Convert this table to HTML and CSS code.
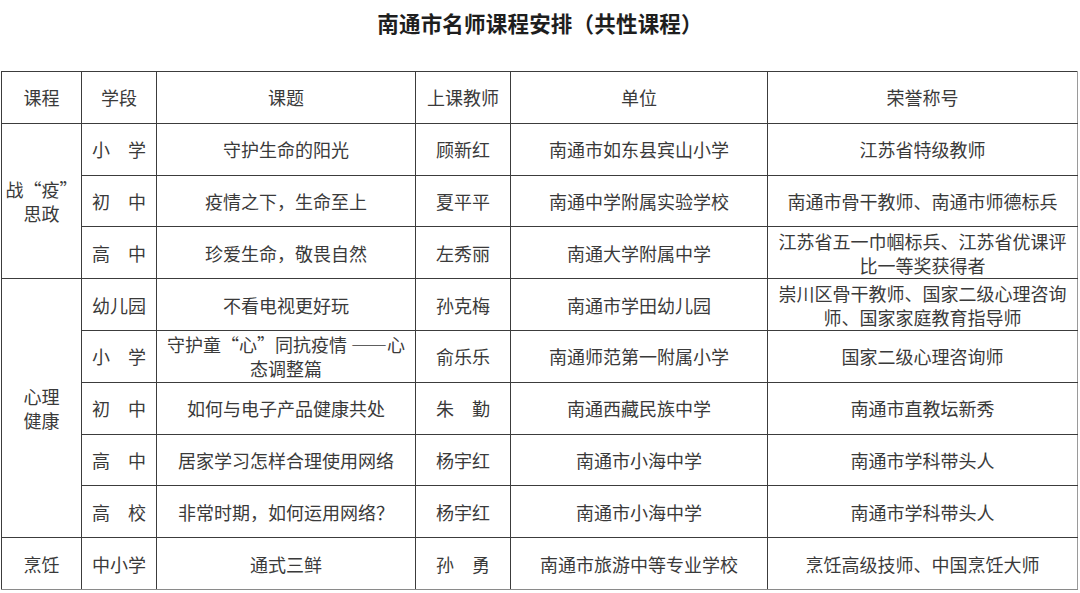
FILE: index.html
```html
<!DOCTYPE html>
<html lang="zh-CN">
<head>
<meta charset="utf-8">
<title>南通市名师课程安排（共性课程）</title>
<link rel="stylesheet" href="styles.css">
</head>
<body>
<div class="page">
  <h1 class="title">南通市名师课程安排（共性课程）</h1>
  <table class="sched">
    <colgroup>
      <col class="c1"><col class="c2"><col class="c3"><col class="c4"><col class="c5"><col class="c6">
    </colgroup>
    <thead>
      <tr><th>课程</th><th>学段</th><th>课题</th><th>上课教师</th><th>单位</th><th>荣誉称号</th></tr>
    </thead>
    <tbody>
      <tr class="grp">
        <td rowspan="3" class="course">战“疫”<br>思政</td>
        <td>小　学</td><td>守护生命的阳光</td><td>顾新红</td><td>南通市如东县宾山小学</td><td>江苏省特级教师</td>
      </tr>
      <tr class="soft"><td>初　中</td><td>疫情之下，生命至上</td><td>夏平平</td><td>南通中学附属实验学校</td><td>南通市骨干教师、南通市师德标兵</td></tr>
      <tr class="soft"><td>高　中</td><td>珍爱生命，敬畏自然</td><td>左秀丽</td><td>南通大学附属中学</td><td class="two">江苏省五一巾帼标兵、江苏省优课评<br>比一等奖获得者</td></tr>
      <tr class="grp">
        <td rowspan="5" class="course">心理<br>健康</td>
        <td>幼儿园</td><td>不看电视更好玩</td><td>孙克梅</td><td>南通市学田幼儿园</td><td class="two">崇川区骨干教师、国家二级心理咨询<br>师、国家家庭教育指导师</td>
      </tr>
      <tr class="soft"><td>小　学</td><td class="two">守护童“心”同抗疫情 ——心<br>态调整篇</td><td>俞乐乐</td><td>南通师范第一附属小学</td><td>国家二级心理咨询师</td></tr>
      <tr><td>初　中</td><td>如何与电子产品健康共处</td><td>朱　勤</td><td>南通西藏民族中学</td><td>南通市直教坛新秀</td></tr>
      <tr><td>高　中</td><td>居家学习怎样合理使用网络</td><td>杨宇红</td><td>南通市小海中学</td><td>南通市学科带头人</td></tr>
      <tr><td>高　校</td><td>非常时期，如何运用网络？</td><td>杨宇红</td><td>南通市小海中学</td><td>南通市学科带头人</td></tr>
      <tr class="grp"><td class="course">烹饪</td><td>中小学</td><td>通式三鲜</td><td>孙　勇</td><td>南通市旅游中等专业学校</td><td>烹饪高级技师、中国烹饪大师</td></tr>
    </tbody>
  </table>
</div>
</body>
</html>
```

FILE: styles.css
```css
html, body {
  margin: 0;
  padding: 0;
  background: #ffffff;
}

.page {
  width: 1080px;
  height: 593px;
  overflow: hidden;
  font-family: "Noto Sans CJK SC", "Noto Sans", sans-serif;
  color: #3a3a3a;
}

.title {
  margin: 0;
  height: 46px;
  line-height: 46px;
  text-align: center;
  font-size: 21.5px;
  font-weight: bold;
  color: #1e1e1e;
  letter-spacing: 0.2px;
}

.sched {
  margin: 25px 0 0 1px;
  width: 1076px;
  border-collapse: collapse;
  table-layout: fixed;
  font-size: 18px;
}

.c1 { width: 80px; }
.c2 { width: 75px; }
.c3 { width: 259px; }
.c4 { width: 95px; }
.c5 { width: 257px; }
.c6 { width: 310px; }

.sched th,
.sched td {
  border: 1px solid #3c3c3c;
  height: 50.8px;
  padding: 0 2px;
  text-align: center;
  vertical-align: middle;
  font-weight: normal;
  line-height: 24px;
  white-space: nowrap;
}

.sched tr.soft td {
  border-top-color: #8a8a8a;
}

.sched th:last-child,
.sched td:last-child {
  border-right-color: #9a9a9a;
}

.sched tbody tr:last-child td {
  border-bottom-color: #8a8a8a;
}
```
